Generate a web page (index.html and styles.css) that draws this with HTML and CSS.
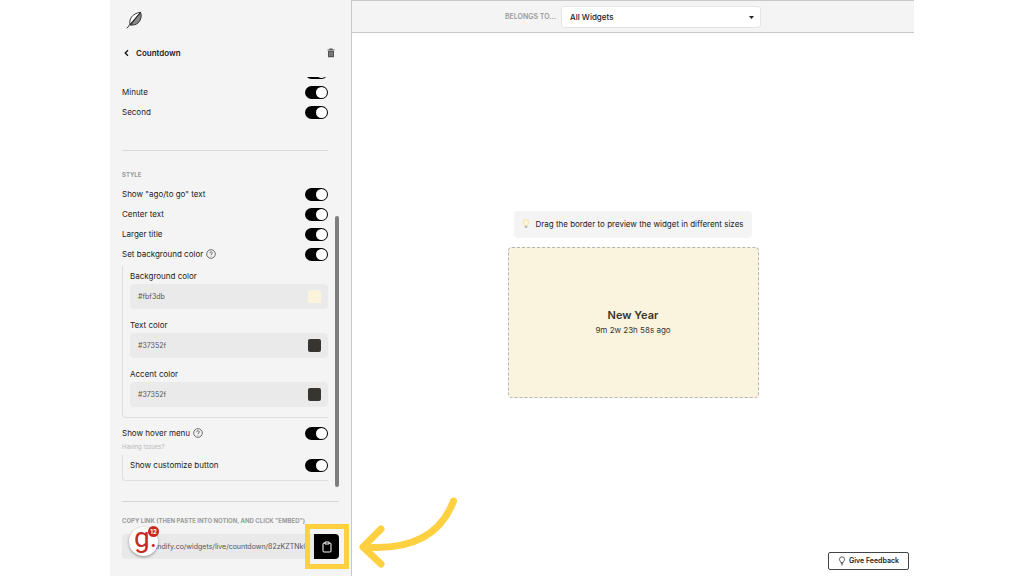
FILE: index.html
```html
<!DOCTYPE html>
<html lang="en">
<head>
<meta charset="utf-8">
<title>Countdown widget</title>
<link rel="stylesheet" href="styles.css">
</head>
<body>
<div class="app">
  <aside class="sidebar">
    <a class="logo" href="#" aria-label="Home">
      <svg width="18" height="20" viewBox="0 0 18 20" fill="none">
        <path d="M4.200 15C2.500 9.500 6 3.500 14.500 2.300L5 14Z" fill="#fff" stroke="#222" stroke-width=".9"/>
        <path d="M14.500 2.300C16.500 7 14 13.500 8.500 14.800L4.500 15.200Z" fill="#888" stroke="#222" stroke-width=".9"/>
        <path d="M1 18.300C4 14 8.500 9 13.500 4" stroke="#222" stroke-width=".9"/>
      </svg>
    </a>
    <div class="title-row">
      <button class="icon-button back" aria-label="Back">
        <svg width="9" height="10" viewBox="0 0 9 10" fill="none" stroke="#111" stroke-width="1.300"><path d="M6 2.200L3.200 5L6 7.800"/></svg>
      </button>
      <h1 class="title">Countdown</h1>
      <button class="icon-button" aria-label="Delete">
        <svg width="8" height="10" viewBox="0 0 8 10"><path d="M0.500 1.500H2.400V0.500H5.600V1.500H7.500V2.500H0.500Z M1 3H7V9.300H1Z" fill="#555"/><path d="M3 4V8M5 4V8" stroke="#aaa" stroke-width=".8"/></svg>
      </button>
    </div>

    <div class="settings">
      <div class="settings-content">
        <div class="row"><input class="toggle" type="checkbox" aria-label="Hour" checked></div>
        <label class="row">Minute<input class="toggle" type="checkbox" checked></label>
        <label class="row">Second<input class="toggle" type="checkbox" checked></label>
        <hr class="divider">
        <h2 class="caption">STYLE</h2>
        <label class="row">Show "ago/to go" text<input class="toggle" type="checkbox" checked></label>
        <label class="row">Center text<input class="toggle" type="checkbox" checked></label>
        <label class="row">Larger title<input class="toggle" type="checkbox" checked></label>
        <label class="row">Set background color
          <svg class="help" width="10" height="10" viewBox="0 0 10 10" fill="none" stroke="#333" stroke-width=".7"><circle cx="5" cy="5" r="4.300"/><path d="M3.700 4.200C3.700 2.300 6.300 2.400 6.300 4C6.300 5 5 5 5 6M5 6.800V7.500"/></svg>
          <input class="toggle" type="checkbox" checked></label>
        <div class="group colors">
          <div class="field">
            <label class="field-label" for="bg">Background color</label>
            <div class="color-box"><input class="color-input" id="bg" type="text" value="#fbf3db"><span class="swatch cream"></span></div>
          </div>
          <div class="field">
            <label class="field-label" for="fg">Text color</label>
            <div class="color-box"><input class="color-input" id="fg" type="text" value="#37352f"><span class="swatch"></span></div>
          </div>
          <div class="field">
            <label class="field-label" for="accent">Accent color</label>
            <div class="color-box"><input class="color-input" id="accent" type="text" value="#37352f"><span class="swatch"></span></div>
          </div>
        </div>
        <label class="row hover-row">Show hover menu
          <svg class="help" width="10" height="10" viewBox="0 0 10 10" fill="none" stroke="#333" stroke-width=".7"><circle cx="5" cy="5" r="4.300"/><path d="M3.700 4.200C3.700 2.300 6.300 2.400 6.300 4C6.300 5 5 5 5 6M5 6.800V7.500"/></svg>
          <input class="toggle" type="checkbox" checked></label>
        <a class="issues" href="#">Having issues?</a>
        <div class="group customize">
          <label class="row">Show customize button<input class="toggle" type="checkbox" checked></label>
        </div>
      </div>
      <div class="scroll-thumb"></div>
    </div>

    <div class="share">
      <label class="caption" for="link">COPY LINK (THEN PASTE INTO NOTION, AND CLICK "EMBED")</label>
      <div class="link-row">
        <input class="link-input" id="link" type="text" value="https://indify.co/widgets/live/countdown/82zKZTNkQw" readonly>
        <button class="copy" aria-label="Copy link">
          <svg width="10" height="12" viewBox="0 0 10 12" fill="none" stroke="#fff" stroke-width="1"><rect x="1" y="2" width="8" height="9" rx="1"/><path d="M3 1H7V3H3Z" fill="#000"/></svg>
        </button>
        <div class="highlight"></div>
        <div class="assistant">g.<span class="count">12</span></div>
        <svg class="arrow" width="104" height="76" viewBox="0 0 104 76" fill="none" stroke="#ffd040" stroke-width="7" stroke-linecap="round" stroke-linejoin="round"><path d="M97.500 6C83 45 48 55 8 52M25 34L7 52L25 69"/></svg>
      </div>
    </div>
  </aside>

  <main class="main">
    <header class="topbar">
      <label class="caption large" for="folder">BELONGS TO...</label>
      <div class="select-wrap">
        <select class="select" id="folder"><option>All Widgets</option></select>
        <svg class="caret" width="5" height="3" viewBox="0 0 5 3"><path d="M0 0H5L2.500 3Z" fill="#222"/></svg>
      </div>
    </header>
    <section class="canvas">
      <p class="tip">
        <svg width="8" height="10" viewBox="0 0 8 10" fill="none"><path d="M2.800 6.800C2.800 5.500 1.300 5 1.300 3.300A2.700 2.700 0 0 1 6.700 3.300C6.700 5 5.200 5.500 5.200 6.800Z" fill="#fff8dc" stroke="#f7dc8a" stroke-width=".9"/><path d="M2.800 7.300H5.200V8.600H2.800Z" fill="#999"/></svg>
        Drag the border to preview the widget in different sizes
      </p>
      <article class="widget">
        <h2 class="widget-title">New Year</h2>
        <p class="widget-time">9m 2w 23h 58s ago</p>
      </article>
    </section>
    <button class="feedback">
      <svg width="8" height="10" viewBox="0 0 8 10" fill="none" stroke="#333" stroke-width=".8"><path d="M2.900 6.600C2.900 5.500 1.500 5 1.500 3.300A2.500 2.500 0 0 1 6.500 3.300C6.500 5 5.100 5.500 5.100 6.600ZM2.900 7.700H5.100M3.300 8.800H4.700"/></svg>
      Give Feedback
    </button>
  </main>
</div>
</body>
</html>
```
FILE: styles.css
```css
* { box-sizing: border-box; }
body {
  margin: 0;
  background: #fff;
  color: #222;
  font: 8px/12px Inter, "Liberation Sans", sans-serif;
}
h1, h2, p { margin: 0; }
button, input, select { font: inherit; color: inherit; margin: 0; }
.app { display: flex; height: 100vh; margin: 0 110px; }

.sidebar {
  display: flex;
  flex-direction: column;
  flex: none;
  width: 242px;
  padding: 10px 12px 17px;
  background: #f4f4f4;
  border-right: 1px solid #c8c8c8;
}
.logo { display: block; height: 20px; margin-left: 4px; }
.logo svg { display: block; }
.title-row { display: flex; align-items: center; margin: 15px 4px 16px 0; height: 16px; }
.title { flex: 1; margin-left: 5px; font-size: 8px; font-weight: 600; }
.icon-button { display: flex; padding: 0; border: 0; background: none; }

.settings {
  position: relative;
  display: flex;
  flex-direction: column;
  justify-content: flex-end;
  flex: 1;
  min-height: 0;
  overflow: hidden;
  padding-bottom: 6px;
}
.settings-content { margin-right: 11px; }
.scroll-thumb {
  position: absolute;
  right: 0;
  bottom: 0;
  width: 4px;
  height: 271px;
  border-radius: 2px;
  background: #7d7f7e;
}
.row { display: flex; align-items: center; height: 20px; }
.help { margin-left: 3px; }
.toggle {
  appearance: none;
  display: flex;
  justify-content: flex-end;
  width: 23px;
  height: 13px;
  margin-left: auto;
  padding: 1px;
  border-radius: 7px;
  background: #000;
}
.toggle::before { content: ""; width: 11px; height: 11px; border-radius: 50%; background: #fff; }
.toggle:not(:checked) { justify-content: flex-start; background: #aaa; }
.divider { height: 1px; margin: 28px 0 18px; border: 0; background: #d8d8d8; }
.caption { color: #9a9a9a; font-size: 6px; font-weight: 700; line-height: 12px; }
.large { font-size: 7px; font-weight: 600; }
h2.caption { margin-bottom: 3px; }
.group {
  border: solid #dedede;
  border-width: 0 0 1px 1px;
  border-radius: 0 0 0 4px;
  padding-left: 7px;
}
.colors { display: grid; gap: 8px; padding-top: 2px; padding-bottom: 10px; margin-top: 2px; }
.field-label { display: block; line-height: 16px; }
.color-box {
  display: flex;
  align-items: center;
  height: 25px;
  padding: 0 7px 0 8px;
  border-radius: 4px;
  background: #eaeaea;
}
.color-input { flex: 1; min-width: 0; padding: 0; border: 0; background: none; color: #555; font-size: 7px; }
.swatch { width: 13px; height: 13px; border-radius: 2px; background: #37352f; }
.cream { background: #fbf3db; }
.hover-row { margin-top: 5px; }
.issues { display: block; height: 12px; color: #b8b8b8; font-size: 6px; line-height: 8px; text-decoration: none; }
.customize { padding-bottom: 5px; }

.share { margin-top: 14px; padding-top: 13px; border-top: 1px solid #d5d5d5; }
.share .caption { display: block; white-space: nowrap; }
.link-row { position: relative; display: flex; margin-top: 7px; height: 25px; }
.link-input {
  flex: 1;
  min-width: 0;
  padding: 0 8px 0 10px;
  border: 0;
  border-radius: 4px 0 0 4px;
  background: #e9e9e9;
  color: #555;
  font-size: 7px;
}
.copy {
  display: flex;
  align-items: center;
  justify-content: center;
  width: 25px;
  padding: 0;
  border: 0;
  border-radius: 0 4px 4px 0;
  background: #000;
}
.highlight { position: absolute; top: -10px; right: -10px; width: 44px; height: 45px; border: 5px solid #ffd040; }
.assistant {
  position: absolute;
  top: -7px;
  left: 7px;
  width: 29px;
  height: 29px;
  padding-left: 5px;
  border-radius: 50%;
  background: #fff;
  box-shadow: 0 1px 3px #0006;
  color: #c42a20;
  font: 400 28px/22px Roboto, sans-serif;
}
.count {
  position: absolute;
  top: -1px;
  right: -1px;
  width: 11px;
  height: 11px;
  border-radius: 50%;
  background: #c42a20;
  color: #fff;
  font: 700 6px/11px Inter, sans-serif;
  text-align: center;
}
.arrow { position: absolute; top: -39px; left: 234px; }

.main { position: relative; display: flex; flex-direction: column; flex: 1; min-width: 0; }
.topbar {
  display: flex;
  align-items: center;
  justify-content: center;
  gap: 5px;
  height: 33px;
  background: #f4f4f4;
  border: solid #c8c8c8;
  border-width: 1px 0;
}
.select-wrap { position: relative; width: 200px; }
.select {
  appearance: none;
  display: block;
  width: 100%;
  height: 22px;
  padding: 0 8px;
  border: 1px solid #e4e4e4;
  border-radius: 3px;
  background: #fff;
  font-weight: 500;
}
.caret { position: absolute; right: 7px; top: 10px; }
.canvas { display: flex; flex: 1; flex-direction: column; align-items: center; justify-content: center; gap: 9px; padding-bottom: 1px; }
.tip {
  display: flex;
  align-items: center;
  gap: 5px;
  height: 27px;
  padding: 0 8px;
  border-radius: 4px;
  background: #f4f4f4;
}
.widget {
  display: flex;
  flex-direction: column;
  align-items: center;
  justify-content: center;
  gap: 2px;
  width: 251px;
  height: 151px;
  border: 1px dashed #b5b5b5;
  border-radius: 4px;
  background: #faf3dd;
  color: #37352f;
}
.widget-title { font-size: 11px; line-height: 14px; font-weight: 600; }
.feedback {
  position: absolute;
  right: 5px;
  bottom: 6px;
  display: flex;
  align-items: center;
  gap: 3px;
  height: 18px;
  padding: 0 9px;
  border: 1px solid #444;
  border-radius: 2px;
  background: #fff;
  font-size: 7px;
  font-weight: 600;
}
```
